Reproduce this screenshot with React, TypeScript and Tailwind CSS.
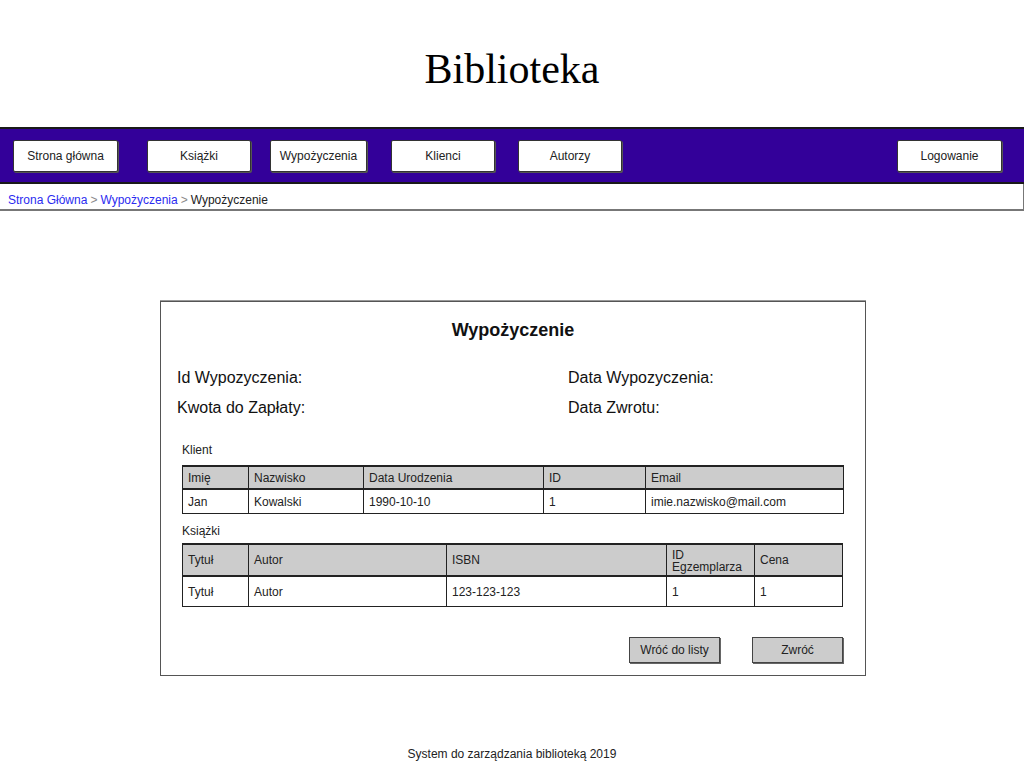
import React from "react";

const navItems: { label: string; w: string; ml: string }[] = [
  { label: "Strona główna", w: "w-[105px]", ml: "ml-[13px]" },
  { label: "Książki", w: "w-[104px]", ml: "ml-[29px]" },
  { label: "Wypożyczenia", w: "w-[97px]", ml: "ml-[19px]" },
  { label: "Klienci", w: "w-[104px]", ml: "ml-[24px]" },
  { label: "Autorzy", w: "w-[104px]", ml: "ml-[23px]" },
];

function NavButton({ label, w, ml }: { label: string; w: string; ml: string }) {
  return (
    <div
      className={`${w} ${ml} h-[32px] bg-white border border-[#333] rounded-[2px] flex items-center justify-center text-[12px] text-[#222] shadow-[1px_1px_0_#555]`}
    >
      {label}
    </div>
  );
}

function Cell({ children, head, last }: { children?: React.ReactNode; head?: boolean; last?: boolean }) {
  return (
    <div
      className={`flex items-center pl-[5px] text-[12px] leading-[12px] text-[#222] ${last ? "" : "border-r border-[#222]"} ${head ? "bg-[#cccccc]" : "bg-white"}`}
    >
      {children}
    </div>
  );
}

export default function App() {
  return (
    <div className="w-[1024px] h-[768px] bg-white overflow-hidden" style={{ fontFamily: '"Liberation Sans", Arial, sans-serif' }}>
      <div className="h-[127px] flex items-center justify-center pt-[10px]">
        <h1 className="text-[42px] text-black leading-none" style={{ fontFamily: '"Liberation Serif", "Times New Roman", serif' }}>
          Biblioteka
        </h1>
      </div>

      <div className="h-[57px] bg-[#330099] border-y-2 border-[#1a1a1a] flex items-center">
        {navItems.map((n) => (
          <NavButton key={n.label} {...n} />
        ))}
        <div className="ml-auto mr-[22px]">
          <NavButton label="Logowanie" w="w-[105px]" ml="ml-0" />
        </div>
      </div>

      <div className="h-[27px] border-b-2 border-r border-[#777] flex items-start pt-[9px] pl-[8px] text-[12px] leading-[14px]">
        <span className="text-[#2b2bf0]">Strona Główna</span>
        <span className="text-[#888] mx-[3px]">&gt;</span>
        <span className="text-[#2b2bf0]">Wypożyczenia</span>
        <span className="text-[#888] mx-[3px]">&gt;</span>
        <span className="text-[#222]">Wypożyczenie</span>
      </div>

      <div className="mt-[90px] ml-[160px] w-[706px] border border-[#555] shadow-[0_-1px_0_#999]">
        <div className="pt-[17px] text-center text-[18px] leading-[22px] font-bold text-[#111]">Wypożyczenie</div>

        <div className="mt-[25px] px-[16px] grid grid-cols-[391px_1fr] gap-y-[6px] text-[16px] leading-[24px] text-[#111]">
          <div>Id Wypozyczenia:</div>
          <div>Data Wypozyczenia:</div>
          <div>Kwota do Zapłaty:</div>
          <div>Data Zwrotu:</div>
        </div>

        <div className="px-[21px]">
          <div className="mt-[22px] text-[12px] leading-[16px] text-[#222]">Klient</div>
          <div className="mt-[7px] w-[662px] border border-[#222] border-t-2">
            <div className="grid grid-cols-[66px_115px_180px_102px_1fr] h-[23px] border-b-2 border-[#222]">
              <Cell head>Imię</Cell>
              <Cell head>Nazwisko</Cell>
              <Cell head>Data Urodzenia</Cell>
              <Cell head>ID</Cell>
              <Cell head last>Email</Cell>
            </div>
            <div className="grid grid-cols-[66px_115px_180px_102px_1fr] h-[23px]">
              <Cell>Jan</Cell>
              <Cell>Kowalski</Cell>
              <Cell>1990-10-10</Cell>
              <Cell>1</Cell>
              <Cell last>imie.nazwisko@mail.com</Cell>
            </div>
          </div>

          <div className="mt-[9px] text-[12px] leading-[16px] text-[#222]">Książki</div>
          <div className="mt-[4px] w-[661px] border border-[#222] border-t-2">
            <div className="grid grid-cols-[66px_198px_220px_88px_1fr] h-[32px] border-b-2 border-[#222]">
              <Cell head>Tytuł</Cell>
              <Cell head>Autor</Cell>
              <Cell head>ISBN</Cell>
              <Cell head>
                <span className="text-[12px] leading-[12px] block pt-[2px]">
                  ID
                  <br />
                  Egzemplarza
                </span>
              </Cell>
              <Cell head last>Cena</Cell>
            </div>
            <div className="grid grid-cols-[66px_198px_220px_88px_1fr] h-[29px]">
              <Cell>Tytuł</Cell>
              <Cell>Autor</Cell>
              <Cell>123-123-123</Cell>
              <Cell>1</Cell>
              <Cell last>1</Cell>
            </div>
          </div>

          <div className="mt-[30px] pb-[12px] flex justify-end gap-[32px] pr-[1px]">
            <div className="w-[91px] h-[26px] bg-[#cccccc] border border-[#444] flex items-center justify-center text-[12px] text-[#222] shadow-[1px_1px_0_#666]">
              Wróć do listy
            </div>
            <div className="w-[91px] h-[26px] bg-[#cccccc] border border-[#444] flex items-center justify-center text-[12px] text-[#222] shadow-[1px_1px_0_#666]">
              Zwróć
            </div>
          </div>
        </div>
      </div>

      <div className="mt-[70px] text-center text-[12px] leading-[16px] text-[#222]">System do zarządzania biblioteką 2019</div>
    </div>
  );
}
